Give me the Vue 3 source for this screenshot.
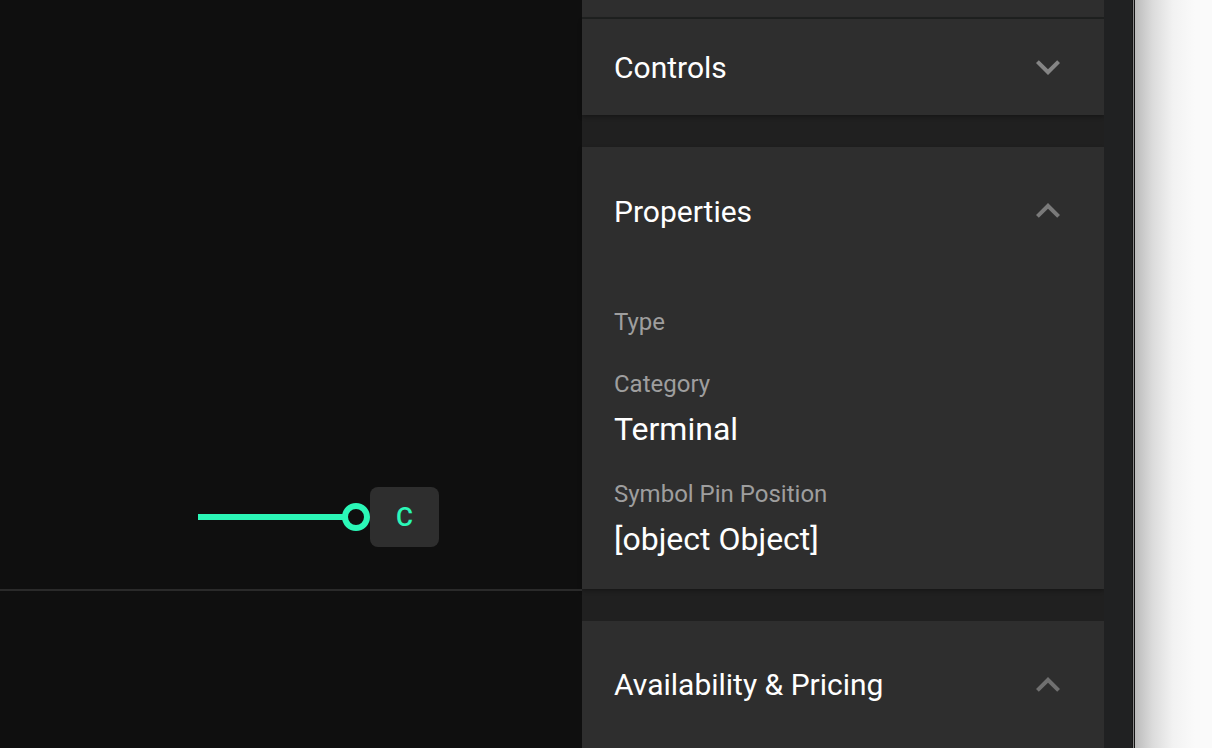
<template>
  <div class="window">
    <div class="left">
      <div class="canvas">
        <div class="pin">
          <div class="pin-line"></div>
          <div class="pin-dot"></div>
          <div class="pin-label">C</div>
        </div>
      </div>
      <div class="canvas-bottom"></div>
    </div>
    <div class="side">
      <div class="card card-prev"></div>
      <div class="card card-controls">
        <div class="card-head">
          <span>Controls</span>
          <svg class="chev chev-light" viewBox="0 0 24 24">
            <path d="M7.41 8.59 12 13.17l4.59-4.58L18 10l-6 6-6-6z" />
          </svg>
        </div>
      </div>
      <div class="card card-props">
        <div class="card-head tall">
          <span>Properties</span>
          <svg class="chev" viewBox="0 0 24 24">
            <path d="M7.41 15.41 12 10.83l4.59 4.58L18 14l-6-6-6 6z" />
          </svg>
        </div>
        <div class="props">
          <div v-for="p in props" :key="p.label" class="prop">
            <div class="prop-label">{{ p.label }}</div>
            <div v-if="p.value" class="prop-value">{{ p.value }}</div>
          </div>
        </div>
      </div>
      <div class="card card-avail">
        <div class="card-head tall">
          <span class="avail-title">Availability &amp; Pricing</span>
          <svg class="chev chev-dim" viewBox="0 0 24 24">
            <path d="M7.41 15.41 12 10.83l4.59 4.58L18 14l-6-6-6 6z" />
          </svg>
        </div>
      </div>
    </div>
    <div class="gutter"></div>
    <div class="edge"></div>
    <div class="outside"></div>
  </div>
</template>

<script setup>
const props = [
  { label: "Type", value: "" },
  { label: "Category", value: "Terminal" },
  { label: "Symbol Pin Position", value: "[object Object]" },
];
</script>

<style>
html,
body {
  margin: 0;
  padding: 0;
  overflow: hidden;
}
</style>

<style scoped>
.window {
  display: flex;
  width: 1212px;
  height: 748px;
  overflow: hidden;
  font-family: Roboto, "Liberation Sans", sans-serif;
  background: #202122;
}
.left {
  width: 582px;
  flex: none;
  display: flex;
  flex-direction: column;
  background: #0f0f0f;
}
.canvas {
  height: 589px;
  flex: none;
  border-bottom: 2px solid #2a2a2a;
  position: relative;
}
.pin {
  position: absolute;
  left: 198px;
  top: 487px;
  display: flex;
  align-items: center;
  height: 60px;
}
.pin-line {
  width: 145px;
  height: 6px;
  background: #2bf7b7;
}
.pin-dot {
  width: 28px;
  height: 28px;
  box-sizing: border-box;
  border: 6px solid #2bf7b7;
  border-radius: 50%;
  background: #0f0f0f;
  margin-left: -1px;
  flex: none;
}
.pin-label {
  width: 69px;
  height: 60px;
  border-radius: 8px;
  background: #2e2e2e;
  color: #2bf7b7;
  font-size: 26px;
  font-weight: 500;
  display: flex;
  align-items: center;
  justify-content: center;
}
.canvas-bottom {
  flex: 1;
}
.side {
  width: 522px;
  flex: none;
  display: flex;
  flex-direction: column;
  background: #202020;
}
.card {
  background: #2e2e2e;
  color: #fff;
  flex: none;
}
.card-prev {
  height: 17px;
  border-bottom: 2px solid #1f2120;
}
.card-controls {
  height: 96px;
  box-shadow: 0 2px 4px rgba(0, 0, 0, 0.3);
  margin-bottom: 32px;
}
.card-props {
  height: 442px;
  box-shadow: 0 2px 4px rgba(0, 0, 0, 0.3);
  margin-bottom: 32px;
}
.card-avail {
  flex: 1;
}
.card-head {
  height: 96px;
  padding: 0 32px;
  display: flex;
  align-items: center;
  justify-content: space-between;
  font-size: 30px;
}
.card-head.tall {
  height: 128px;
}
.avail-title {
  margin-bottom: 2px;
}
.chev {
  width: 48px;
  height: 48px;
  flex: none;
  fill: #7a7a7a;
}
.chev-light {
  fill: #858585;
}
.chev-dim {
  fill: #707070;
}
.props {
  padding: 0 32px;
  margin-top: 32px;
}
.prop {
  padding-bottom: 28px;
}
.prop-label {
  font-size: 24px;
  line-height: 30px;
  padding-bottom: 4px;
  color: #9e9e9e;
}
.prop-value {
  font-size: 32px;
  line-height: 44px;
  padding-top: 4px;
  color: #fff;
}
.gutter {
  width: 28px;
  flex: none;
  background: #202122;
}
.edge {
  width: 3px;
  flex: none;
  background: linear-gradient(90deg, #151515 33.3%, #8a8a8a 33.3%, #8a8a8a 66.6%, #151515 66.6%);
}
.outside {
  flex: 1;
  background: linear-gradient(90deg, #bbbbbb 0, #dcdcdc 18px, #f2f2f2 38px, #fafafa 60px);
}
</style>
